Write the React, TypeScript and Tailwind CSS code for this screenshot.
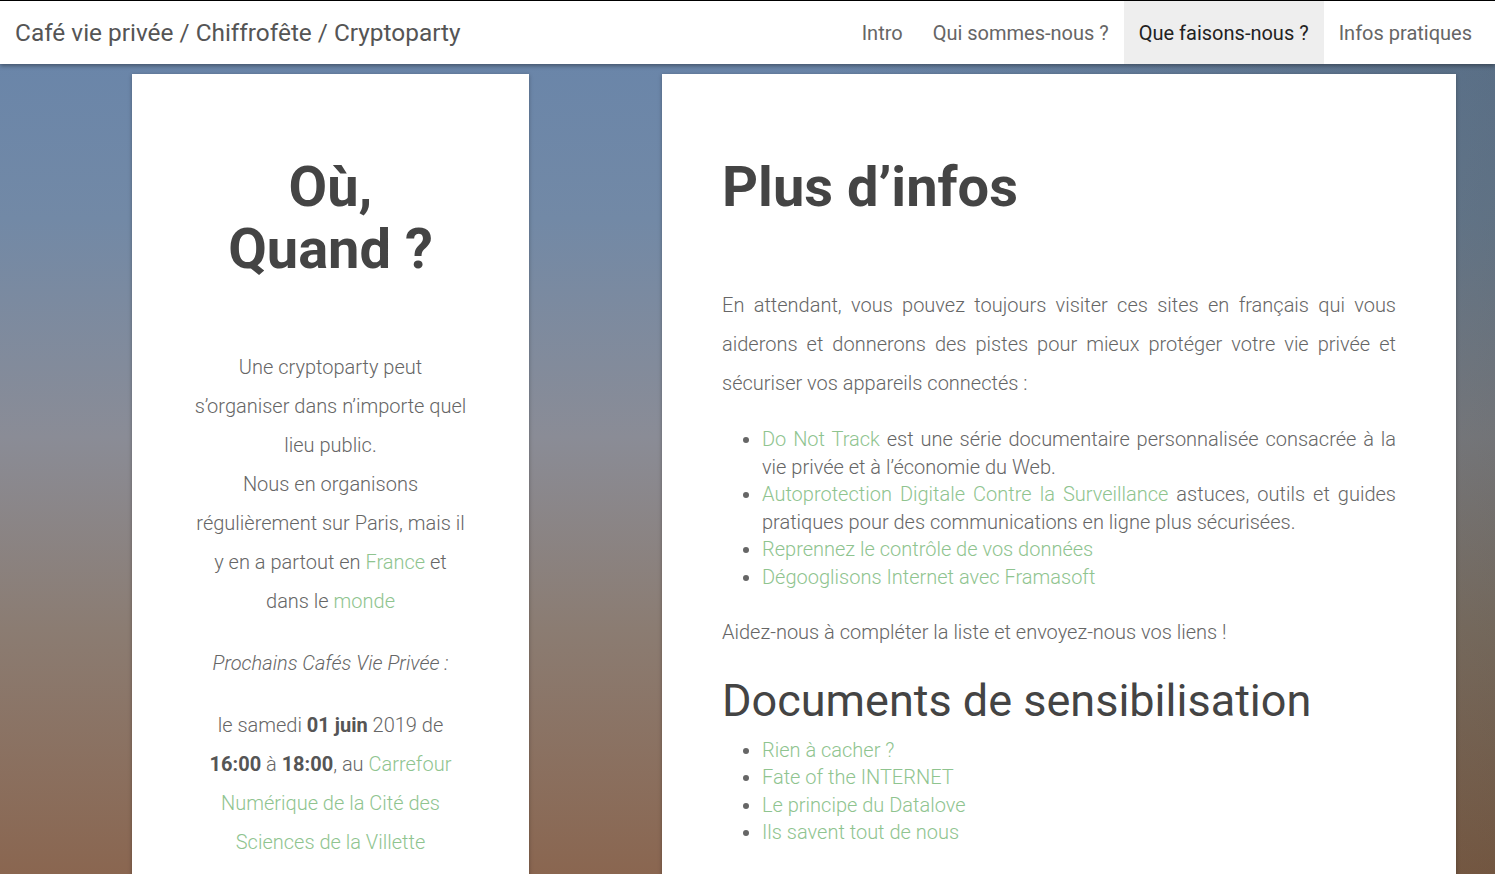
import React from "react";

const green = "text-[#8fc48f]";

function NavItem({ label, active }: { label: string; active?: boolean }) {
  return (
    <a
      className={
        active
          ? "flex items-center px-[15px] bg-[#eeeeee] text-[#222] text-[20px]"
          : "flex items-center px-[15px] text-[#666] text-[20px]"
      }
    >
      {label}
    </a>
  );
}

export default function App() {
  return (
    <div className="h-[874px] overflow-hidden font-['Roboto',sans-serif] bg-[linear-gradient(to_right,rgba(0,0,0,0)_55%,rgba(30,30,10,0.22)_100%),linear-gradient(to_bottom,#6784aa_0%,#7289a6_25%,#8a8c96_50%,#8b7c72_72%,#8a6650_100%)]">
      <nav className="relative z-10 h-[64px] bg-white border-t border-black flex items-stretch justify-between shadow-[0_2px_4px_rgba(0,0,0,0.35)]">
        <div className="flex items-center pl-[15px] text-[24.4px] text-[#555] pt-[2px]">
          Café vie privée / Chiffrofête / Cryptoparty
        </div>
        <div className="flex items-stretch pr-[8px]">
          <NavItem label="Intro" />
          <NavItem label="Qui sommes-nous ?" />
          <NavItem label="Que faisons-nous ?" active />
          <NavItem label="Infos pratiques" />
        </div>
      </nav>

      <div className="flex items-start pl-[132px] gap-[133px] mt-[10px]">
        {/* Left card */}
        <section className="w-[397px] bg-white shadow-[0_1px_4px_rgba(0,0,0,0.3)] px-[62px] pt-[82px] pb-[200px] text-center text-[#666] font-light text-[20px] leading-[39px]">
          <h1 className="text-[56px] leading-[62px] font-bold text-[#444] mb-[68px]">
            Où,
            <br />
            Quand ?
          </h1>
          <p className="mb-[23px]">
            Une cryptoparty peut s’organiser dans n’importe quel lieu public.
            <br />
            Nous en organisons régulièrement sur Paris, mais il y en a partout en{" "}
            <a className={green}>France</a> et dans le <a className={green}>monde</a>
          </p>
          <p className="mb-[23px] italic">Prochains Cafés Vie Privée :</p>
          <p className="mb-[23px]">
            le samedi <b className="font-bold text-[#555]">01 juin</b> 2019 de{" "}
            <b className="font-bold text-[#555]">16:00</b> à{" "}
            <b className="font-bold text-[#555]">18:00</b>, au{" "}
            <a className={green}>
              Carrefour Numérique de la Cité des Sciences de la Villette
            </a>
          </p>
        </section>

        {/* Right card */}
        <section className="w-[794px] bg-white shadow-[0_1px_4px_rgba(0,0,0,0.3)] px-[60px] pt-[82px] pb-[200px] text-[#666] font-light text-[20px]">
          <h1 className="text-[56px] leading-[62px] font-bold text-[#444] mb-[68px]">
            Plus d’infos
          </h1>
          <p className="leading-[39px] text-justify mb-[23px]">
            En attendant, vous pouvez toujours visiter ces sites en français qui
            vous aiderons et donnerons des pistes pour mieux protéger votre vie
            privée et sécuriser vos appareils connectés :
          </p>
          <ul className="list-disc pl-[40px] leading-[27.5px] text-justify mb-[22px]">
            <li>
              <a className={green}>Do Not Track</a> est une série documentaire
              personnalisée consacrée à la vie privée et à l’économie du Web.
            </li>
            <li>
              <a className={green}>Autoprotection Digitale Contre la Surveillance</a>{" "}
              astuces, outils et guides pratiques pour des communications en ligne
              plus sécurisées.
            </li>
            <li>
              <a className={green}>Reprennez le contrôle de vos données</a>
            </li>
            <li>
              <a className={green}>Dégooglisons Internet avec Framasoft</a>
            </li>
          </ul>
          <p className="leading-[39px] mb-[24px]">
            Aidez-nous à compléter la liste et envoyez-nous vos liens !
          </p>
          <h2 className="text-[45px] leading-[49.5px] font-normal text-[#444] mb-[11px]">
            Documents de sensibilisation
          </h2>
          <ul className="list-disc pl-[40px] leading-[27.5px]">
            <li>
              <a className={green}>Rien à cacher ?</a>
            </li>
            <li>
              <a className={green}>Fate of the INTERNET</a>
            </li>
            <li>
              <a className={green}>Le principe du Datalove</a>
            </li>
            <li>
              <a className={green}>Ils savent tout de nous</a>
            </li>
          </ul>
        </section>
      </div>
    </div>
  );
}
